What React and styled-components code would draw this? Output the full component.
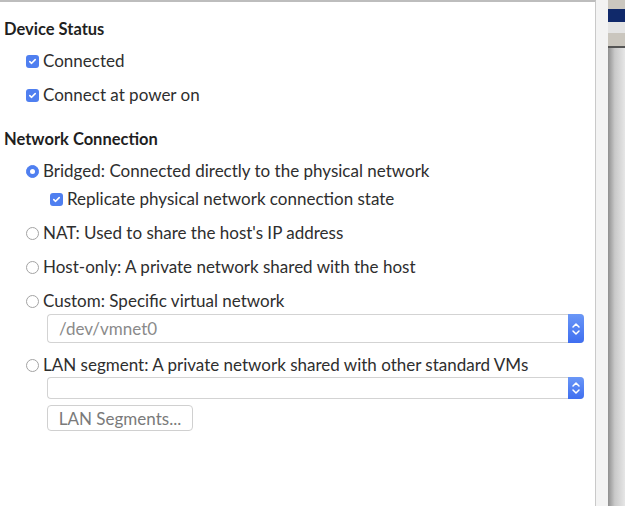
import React from 'react'
import styled, { createGlobalStyle } from 'styled-components'

const GlobalStyle = createGlobalStyle`
  body {
    margin: 0;
    background: #f3f3f3;
    font-family: 'Lato', 'Noto Sans', sans-serif;
  }
`

const Page = styled.div`
  display: flex;
  height: 506px;
  width: 625px;
  overflow: hidden;
`

const Panel = styled.div`
  width: 596px;
  flex-shrink: 0;
  box-sizing: border-box;
  background: #fff;
  border-top: 2px solid #bdbdbd;
  border-right: 1px solid #c9c9c9;
  padding: 17px 0 0 4px;
  color: #2e2e2e;
  font-size: 17px;
`

const Gutter = styled.div`
  width: 12px;
  flex-shrink: 0;
  background: #f3f3f3;
`

const BackWindow = styled.div`
  flex: 1;
  display: flex;
  flex-direction: column;
  background: linear-gradient(to right, #8f8f8f, #c9c9c9 40%, #e6e6e6);
`

const Band = styled.div`
  height: ${p => p.$h}px;
  background: ${p => p.$bg};
  flex-shrink: 0;
`

const Heading = styled.div`
  font-weight: 700;
  font-size: 16.5px;
  line-height: 20px;
  margin-top: ${p => p.$mt || 0}px;
  color: #1f1f1f;
`

const Row = styled.label`
  display: flex;
  align-items: center;
  gap: 4px;
  height: 20px;
  line-height: 20px;
  margin-top: ${p => p.$mt || 0}px;
  margin-left: ${p => p.$indent || 22}px;
  white-space: nowrap;
`

const Box = styled.span`
  width: 13px;
  height: 13px;
  border-radius: 3px;
  background: #4f7ff0;
  display: flex;
  align-items: center;
  justify-content: center;
  flex-shrink: 0;
`

const Radio = styled.span`
  width: 13px;
  height: 13px;
  box-sizing: border-box;
  border-radius: 50%;
  flex-shrink: 0;
  display: flex;
  align-items: center;
  justify-content: center;
  background: ${p => (p.$on ? '#4f7ff0' : '#fff')};
  border: 1px solid ${p => (p.$on ? '#4f7ff0' : '#a3a3a3')};

  &::after {
    content: '';
    display: ${p => (p.$on ? 'block' : 'none')};
    width: 5px;
    height: 5px;
    border-radius: 50%;
    background: #fff;
  }
`

const Select = styled.div`
  display: flex;
  box-sizing: border-box;
  width: 537px;
  height: ${p => p.$h}px;
  margin: ${p => p.$mt}px 0 0 43px;
  border: 1px solid #d3d3d3;
  border-right: none;
  border-radius: 4px;
  color: #8a8a8a;
`

const SelectText = styled.div`
  flex: 1;
  display: flex;
  align-items: center;
  padding-left: 11px;
`

const Stepper = styled.div`
  width: 16px;
  margin: -1px 0;
  border-radius: 0 4px 4px 0;
  background: linear-gradient(#6a97f7, #3f6ef0);
  display: flex;
  align-items: center;
  justify-content: center;
`

const Button = styled.div`
  box-sizing: border-box;
  width: 146px;
  height: 26px;
  margin: 6px 0 0 43px;
  border: 1px solid #d0d0d0;
  border-radius: 4px;
  color: #7a7a7a;
  display: flex;
  align-items: center;
  justify-content: center;
`

const Check = () => (
  <svg width="9" height="9" viewBox="0 0 9 9">
    <path d="M1.8 4.6 L3.6 6.3 L7.2 2.6" stroke="#fff" strokeWidth="1.6" fill="none" strokeLinecap="round" strokeLinejoin="round" />
  </svg>
)

const Chevrons = () => (
  <svg width="10" height="16" viewBox="0 0 10 16">
    <path d="M2 6 L5 3 L8 6 M2 10 L5 13 L8 10" stroke="#fff" strokeWidth="1.5" fill="none" strokeLinecap="round" strokeLinejoin="round" />
  </svg>
)

const Checkbox = ({ label, mt, indent }) => (
  <Row $mt={mt} $indent={indent}>
    <Box><Check /></Box>
    {label}
  </Row>
)

const Option = ({ label, on, mt }) => (
  <Row $mt={mt}>
    <Radio $on={on} />
    {label}
  </Row>
)

const App = () => (
  <Page>
    <GlobalStyle />
    <Panel>
      <Heading>Device Status</Heading>
      <Checkbox label="Connected" mt={12} />
      <Checkbox label="Connect at power on" mt={14} />

      <Heading $mt={24}>Network Connection</Heading>
      <Option on label="Bridged: Connected directly to the physical network" mt={12} />
      <Checkbox label="Replicate physical network connection state" mt={8} indent={46} />
      <Option label="NAT: Used to share the host's IP address" mt={14} />
      <Option label="Host-only: A private network shared with the host" mt={14} />
      <Option label="Custom: Specific virtual network" mt={14} />
      <Select $h={29} $mt={3}>
        <SelectText>/dev/vmnet0</SelectText>
        <Stepper><Chevrons /></Stepper>
      </Select>
      <Option label="LAN segment: A private network shared with other standard VMs" mt={12} />
      <Select $h={22} $mt={2}>
        <SelectText />
        <Stepper><Chevrons /></Stepper>
      </Select>
      <Button>LAN Segments...</Button>
    </Panel>
    <Gutter />
    <BackWindow>
      <Band $h={9} $bg="#cbc7bf" />
      <Band $h={13} $bg="#10296a" />
      <Band $h={11} $bg="#e4e4e4" />
      <Band $h={13} $bg="#cac6be" />
      <Band $h={2} $bg="#555" />
    </BackWindow>
  </Page>
)

export default App
